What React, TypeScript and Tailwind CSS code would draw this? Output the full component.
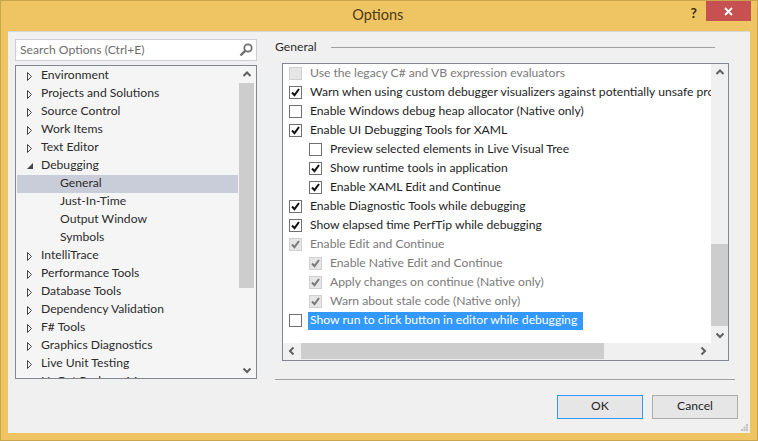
import React from "react";

const FONT = "font-['Lato','Noto_Sans',sans-serif]";

const Collapsed = () => (
  <svg width="7" height="11" viewBox="0 0 7 11" className="block">
    <path d="M1.5 1.5 L1.5 9.5 L5.5 5.5 Z" fill="#f5f5f5" stroke="#444" strokeWidth="1" />
  </svg>
);
const Expanded = () => (
  <svg width="8" height="8" viewBox="0 0 8 8" className="block">
    <path d="M7 1 L7 7 L1 7 Z" fill="#444" />
  </svg>
);
const Chevron = ({ dir }: { dir: "up" | "down" | "left" | "right" }) => {
  const d = {
    up: "M1.5 6 L5 2.5 L8.5 6",
    down: "M1.5 3.5 L5 7 L8.5 3.5",
    left: "M6.5 1.5 L3 5 L6.5 8.5",
    right: "M3.5 1.5 L7 5 L3.5 8.5",
  }[dir];
  return (
    <svg width="10" height="10" viewBox="0 0 10 10" className="block">
      <path d={d} fill="none" stroke="#606060" strokeWidth="2" />
    </svg>
  );
};

type TreeRow = { t: string; k: "c" | "e" | "n"; sel?: boolean };
const tree: TreeRow[] = [
  { t: "Environment", k: "c" },
  { t: "Projects and Solutions", k: "c" },
  { t: "Source Control", k: "c" },
  { t: "Work Items", k: "c" },
  { t: "Text Editor", k: "c" },
  { t: "Debugging", k: "e" },
  { t: "General", k: "n", sel: true },
  { t: "Just-In-Time", k: "n" },
  { t: "Output Window", k: "n" },
  { t: "Symbols", k: "n" },
  { t: "IntelliTrace", k: "c" },
  { t: "Performance Tools", k: "c" },
  { t: "Database Tools", k: "c" },
  { t: "Dependency Validation", k: "c" },
  { t: "F# Tools", k: "c" },
  { t: "Graphics Diagnostics", k: "c" },
  { t: "Live Unit Testing", k: "c" },
  { t: "NuGet Package Manager", k: "c" },
];

type Opt = { t: string; on: boolean; dis?: boolean; ind?: boolean; sel?: boolean };
const options: Opt[] = [
  { t: "Use the legacy C# and VB expression evaluators", on: false, dis: true },
  { t: "Warn when using custom debugger visualizers against potentially unsafe processes", on: true },
  { t: "Enable Windows debug heap allocator (Native only)", on: false },
  { t: "Enable UI Debugging Tools for XAML", on: true },
  { t: "Preview selected elements in Live Visual Tree", on: false, ind: true },
  { t: "Show runtime tools in application", on: true, ind: true },
  { t: "Enable XAML Edit and Continue", on: true, ind: true },
  { t: "Enable Diagnostic Tools while debugging", on: true },
  { t: "Show elapsed time PerfTip while debugging", on: true },
  { t: "Enable Edit and Continue", on: true, dis: true },
  { t: "Enable Native Edit and Continue", on: true, dis: true, ind: true },
  { t: "Apply changes on continue (Native only)", on: true, dis: true, ind: true },
  { t: "Warn about stale code (Native only)", on: true, dis: true, ind: true },
  { t: "Show run to click button in editor while debugging", on: false, sel: true },
];

const Check = ({ on, dis }: { on: boolean; dis?: boolean }) => (
  <span
    className={
      dis
        ? "flex h-[13px] w-[13px] shrink-0 items-center justify-center border border-[#d0d0d0] bg-[#e6e6e6]"
        : "flex h-[13px] w-[13px] shrink-0 items-center justify-center border border-[#707070] bg-white"
    }
  >
    {on && (
      <svg width="11" height="11" viewBox="0 0 11 11" className="block">
        <path
          d="M2 5.5 L4.5 8.2 L9 2"
          fill="none"
          stroke={dis ? "#7a7a7a" : "#111"}
          strokeWidth="2"
        />
      </svg>
    )}
  </span>
);

export default function App() {
  return (
    <div className={`${FONT} flex h-[441px] w-[758px] flex-col overflow-hidden border border-[#c9a54e] bg-[#efc564] text-[12.15px] text-[#1e1e1e]`}>
      {/* Title bar */}
      <div className="flex h-[30px] shrink-0">
        <div className="flex flex-1 items-center justify-center pb-[1px] pl-[64px] text-[14.5px] leading-none text-[#4a3a18]">
          <span>Options</span>
        </div>
        <div className="flex h-[20px] items-center pr-[6px]">
          <span className="mr-[9px] pt-[3px] text-[14px] font-bold text-[#3a2c0c]">?</span>
          <span className="flex h-[20px] w-[45px] items-center justify-center bg-[#c75050]">
            <svg width="9" height="9" viewBox="0 0 9 9" className="block">
              <path d="M1 1 L8 8 M8 1 L1 8" stroke="#fff" strokeWidth="1.8" />
            </svg>
          </span>
        </div>
      </div>

      {/* Client area */}
      <div className="mx-[7px] flex h-[402px] flex-col border-t border-[#d8d8d8] bg-[#f0f0f0] px-[7px] pt-[7px]">
        <div className="flex h-[340px] shrink-0">
          {/* Left column */}
          <div className="flex w-[242px] shrink-0 flex-col gap-[4px]">
            <div className="flex h-[22px] items-center justify-between border border-[#ccced4] bg-white pl-[4px] pr-[2px] text-[#6d6d6d]">
              <span>Search Options (Ctrl+E)</span>
              <svg width="16" height="16" viewBox="0 0 16 16" className="block">
                <circle cx="10" cy="6" r="3.7" fill="none" stroke="#707070" strokeWidth="1.8" />
                <path d="M7.2 8.8 L2.5 13.5" stroke="#707070" strokeWidth="2.4" />
              </svg>
            </div>
            <div className="flex h-[314px] border border-[#828790] bg-[#f5f5f5]">
              <div className="w-[222px] shrink-0 overflow-hidden pl-[1px] pt-[1px]">
                {tree.map((r) => (
                  <div
                    key={r.t}
                    className={
                      r.sel
                        ? "flex h-[18px] items-center bg-[#c9cdd9] leading-none"
                        : "flex h-[18px] items-center leading-none"
                    }
                  >
                    <span className="flex w-[24px] shrink-0 items-center justify-center pl-[1px]">
                      {r.k === "c" && <Collapsed />}
                      {r.k === "e" && <Expanded />}
                    </span>
                    <span className={r.k === "n" ? "pb-[2px] pl-[19px] text-[#2b2b2b]" : "pb-[2px] text-[#2b2b2b]"}>{r.t}</span>
                  </div>
                ))}
              </div>
              <div className="ml-[1px] flex w-[15px] shrink-0 flex-col">
                <div className="flex h-[17px] items-center justify-center">
                  <Chevron dir="up" />
                </div>
                <div className="h-[205px] bg-[#cdcdcd]" />
                <div className="flex-1" />
                <div className="flex h-[17px] items-center justify-center">
                  <Chevron dir="down" />
                </div>
              </div>
            </div>
          </div>

          {/* Right column */}
          <div className="ml-[18px] flex w-[460px] shrink-0 flex-col">
            <div className="flex h-[17px] items-center">
              <span className="w-[56px] shrink-0 pb-[1px] text-[#2b2b2b]">General</span>
              <span className="h-px w-[384px] bg-[#a0a0a0]" />
            </div>
            <div className="ml-[7px] mt-[7px] flex h-[298px] w-[447px] flex-col border border-[#828790] bg-[#f0f0f0]">
              <div className="flex h-[279px] shrink-0">
                <div className="w-[428px] shrink-0 overflow-hidden bg-white">
                  {options.map((o) => (
                    <div
                      key={o.t}
                      className={
                        o.ind
                          ? "flex h-[19px] items-center gap-[8px] whitespace-nowrap pl-[26px] leading-none"
                          : "flex h-[19px] items-center gap-[8px] whitespace-nowrap pl-[6px] leading-none"
                      }
                    >
                      <Check on={o.on} dis={o.dis} />
                      <span
                        className={
                          o.sel
                            ? "-ml-[2px] flex h-[18px] items-center bg-[#3399ff] pb-[1px] pl-[2px] pr-[6px] text-white"
                            : o.dis
                              ? "pb-[1px] text-[#7a7a7a]"
                              : "pb-[1px] text-[#1e1e1e]"
                        }
                      >
                        {o.t}
                      </span>
                    </div>
                  ))}
                </div>
                <div className="flex w-[17px] shrink-0 flex-col">
                  <div className="flex h-[17px] items-center justify-center">
                    <Chevron dir="up" />
                  </div>
                  <div className="mt-[163px] h-[82px] bg-[#cdcdcd]" />
                  <div className="flex-1" />
                  <div className="flex h-[17px] items-center justify-center">
                    <Chevron dir="down" />
                  </div>
                </div>
              </div>
              <div className="flex h-[16px] shrink-0 items-stretch">
                <div className="flex w-[18px] items-center justify-center">
                  <Chevron dir="left" />
                </div>
                <div className="w-[303px] bg-[#cdcdcd]" />
                <div className="flex-1" />
                <div className="flex w-[50px] items-center justify-center">
                  <Chevron dir="right" />
                </div>
              </div>
            </div>
          </div>
        </div>

        {/* Footer */}
        <div className="ml-[260px] h-px w-[460px] shrink-0 bg-[#a0a0a0]" />
        <div className="mt-[15px] flex justify-end gap-[9px] pr-[5px]">
          <button className="h-[24px] w-[86px] border border-[#3399ff] bg-[#e6e6e6] pb-[2px] leading-none text-[#1e1e1e]">OK</button>
          <button className="h-[24px] w-[86px] border border-[#acacac] bg-[#e6e6e6] pb-[2px] leading-none text-[#1e1e1e]">Cancel</button>
        </div>
        <div className="relative flex-1">
          <svg width="7" height="7" viewBox="0 0 7 7" className="absolute bottom-[2px] right-[-5px] block">
            <path d="M5 0h2v2H5z M2.5 2.5h2v2h-2z M5 2.5h2v2H5z M0 5h2v2H0z M2.5 5h2v2h-2z M5 5h2v2H5z" fill="#c0c0c0" />
          </svg>
        </div>
      </div>
    </div>
  );
}
